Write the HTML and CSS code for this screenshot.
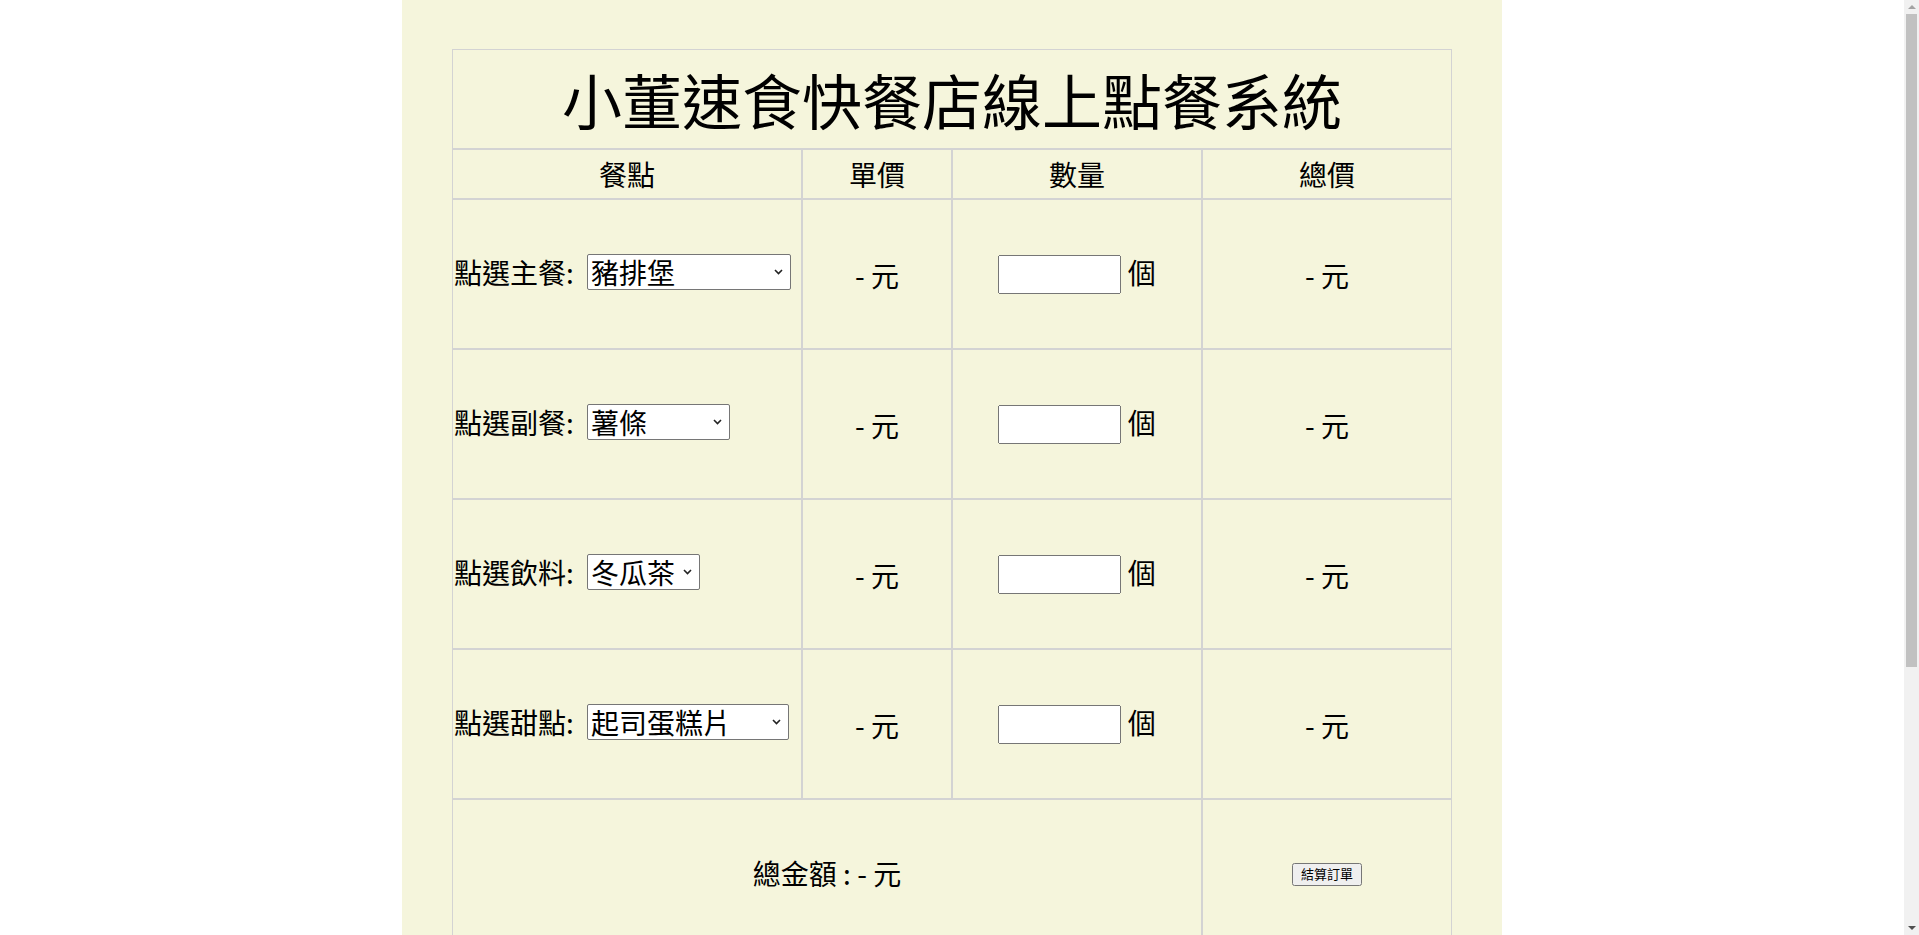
FILE: index.html
```html
<!DOCTYPE html>
<html lang="zh-Hant">
<head>
<meta charset="utf-8">
<title>小董速食快餐店線上點餐系統</title>
<link rel="stylesheet" href="styles.css">
</head>
<body>
<div class="page">
  <table class="order">
    <colgroup>
      <col class="c-item">
      <col class="c-price">
      <col class="c-qty">
      <col class="c-total">
    </colgroup>
    <tr class="title-row">
      <td colspan="4" class="title">小董速食快餐店線上點餐系統</td>
    </tr>
    <tr class="head-row">
      <th>餐點</th>
      <th>單價</th>
      <th>數量</th>
      <th>總價</th>
    </tr>
    <tr class="item-row">
      <td class="item">點選主餐: <span class="sel-wrap"><select class="sel sel-main"><option>豬排堡</option><option>牛肉堡</option><option>雞腿堡</option></select><svg class="chev" width="9" height="6" viewBox="0 0 9 6"><path d="M1 1 L4.5 4.5 L8 1" fill="none" stroke="#222" stroke-width="1.6"/></svg></span></td>
      <td>- 元</td>
      <td><input type="text" class="qty"> 個</td>
      <td>- 元</td>
    </tr>
    <tr class="item-row">
      <td class="item">點選副餐: <span class="sel-wrap"><select class="sel sel-side"><option>薯條</option><option>雞塊</option></select><svg class="chev" width="9" height="6" viewBox="0 0 9 6"><path d="M1 1 L4.5 4.5 L8 1" fill="none" stroke="#222" stroke-width="1.6"/></svg></span></td>
      <td>- 元</td>
      <td><input type="text" class="qty"> 個</td>
      <td>- 元</td>
    </tr>
    <tr class="item-row">
      <td class="item">點選飲料: <span class="sel-wrap"><select class="sel sel-drink"><option>冬瓜茶</option><option>紅茶</option></select><svg class="chev" width="9" height="6" viewBox="0 0 9 6"><path d="M1 1 L4.5 4.5 L8 1" fill="none" stroke="#222" stroke-width="1.6"/></svg></span></td>
      <td>- 元</td>
      <td><input type="text" class="qty"> 個</td>
      <td>- 元</td>
    </tr>
    <tr class="item-row">
      <td class="item">點選甜點: <span class="sel-wrap"><select class="sel sel-dessert"><option>起司蛋糕片</option><option>布丁</option></select><svg class="chev" width="9" height="6" viewBox="0 0 9 6"><path d="M1 1 L4.5 4.5 L8 1" fill="none" stroke="#222" stroke-width="1.6"/></svg></span></td>
      <td>- 元</td>
      <td><input type="text" class="qty"> 個</td>
      <td>- 元</td>
    </tr>
    <tr class="item-row total-row">
      <td colspan="3">總金額 : - 元</td>
      <td><button type="button" class="checkout">結算訂單</button></td>
    </tr>
  </table>
</div>
<div class="vscroll" aria-hidden="true">
  <div class="vs-btn"><span class="tri-up"></span></div>
  <div class="vs-track"><div class="vs-thumb"></div></div>
  <div class="vs-btn"><span class="tri-down"></span></div>
</div>
</body>
</html>
```
FILE: styles.css
```css
html, body {
  margin: 0;
  padding: 0;
}

body {
  padding-right: 15px;
  background: #ffffff;
  font-family: "Noto Sans CJK TC", "Noto Sans", sans-serif;
  color: #000;
}

.page {
  width: 1100px;
  margin: 0 auto;
  background: #f5f5dc;
  padding: 49px 0 349px;
}

.order {
  width: 1000px;
  margin: 0 auto;
  border-collapse: separate;
  border-spacing: 0;
  table-layout: fixed;
}

.c-item { width: 350px; }
.c-price { width: 150px; }
.c-qty { width: 250px; }
.c-total { width: 250px; }

.order td,
.order th {
  border: 1px solid #d3d3d3;
  padding: 0;
  font-size: 28px;
  font-weight: normal;
  text-align: center;
  vertical-align: middle;
  white-space: nowrap;
  line-height: 1.2;
}

.order td.title {
  height: 98px;
  font-size: 60px;
  line-height: 1;
}

.head-row th {
  height: 46px;
  padding-top: 2px;
}

.item-row td {
  height: 144px;
  padding-top: 4px;
}

.total-row td {
  height: 148px;
  padding-top: 0;
}

.order td.item {
  text-align: left;
  padding-left: 1px;
}

.sel-wrap {
  position: relative;
  display: inline-block;
  vertical-align: middle;
  margin-left: 7px;
  margin-bottom: 9px;
  line-height: 0;
}

.sel {
  -webkit-appearance: none;
  appearance: none;
  font-family: "Noto Sans CJK TC", sans-serif;
  font-size: 28px;
  line-height: 34px;
  height: 36px;
  box-sizing: border-box;
  padding: 0 0 0 3px;
  margin: 0;
  border: 1px solid #767676;
  border-radius: 2px;
  background: #fff;
  color: #000;
}

.chev {
  position: absolute;
  right: 8px;
  top: 15px;
  pointer-events: none;
}

.sel-main { width: 204px; }
.sel-side { width: 143px; }
.sel-drink { width: 113px; }
.sel-dessert { width: 202px; }

.qty {
  width: 123px;
  height: 39px;
  box-sizing: border-box;
  vertical-align: middle;
  margin-bottom: 4px;
  font-size: 20px;
}

.checkout {
  display: block;
  margin: 0 auto;
  font-family: "Noto Sans CJK TC", sans-serif;
  font-size: 13px;
  line-height: 16px;
  height: 23px;
  padding: 1px 7px;
}

.vscroll {
  position: fixed;
  top: 0;
  right: 0;
  width: 15px;
  height: 100vh;
  background: #f1f1f1;
  display: flex;
  flex-direction: column;
}

.vs-btn {
  height: 14px;
  flex: none;
  display: flex;
  align-items: center;
  justify-content: center;
}

.tri-up {
  width: 0;
  height: 0;
  border-left: 4px solid transparent;
  border-right: 4px solid transparent;
  border-bottom: 4px solid #a3a3a3;
}

.tri-down {
  width: 0;
  height: 0;
  border-left: 4px solid transparent;
  border-right: 4px solid transparent;
  border-top: 4px solid #505050;
}

.vs-track {
  flex: 1;
  padding: 0 2px 0 2px;
}

.vs-thumb {
  height: 653px;
  background: #c1c1c1;
}
```
